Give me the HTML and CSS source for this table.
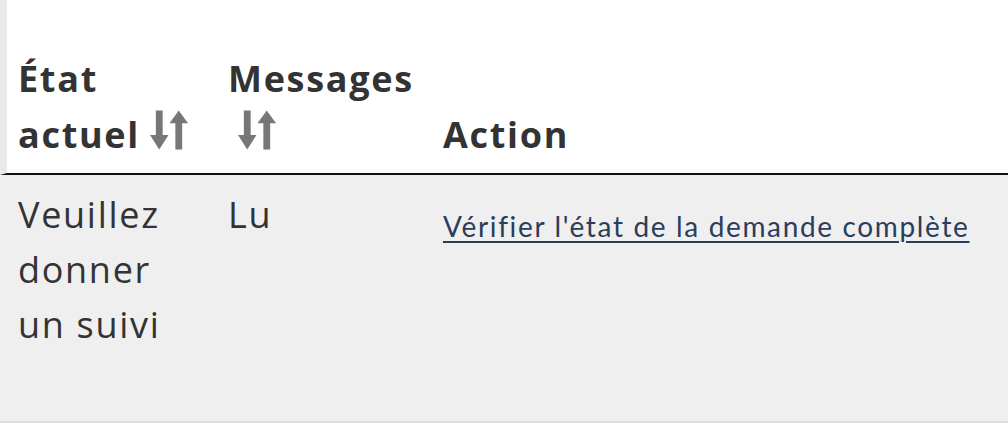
FILE: index.html
```html
<!DOCTYPE html>
<html lang="fr">
<head>
<meta charset="utf-8">
<title>Demandes</title>
<link rel="stylesheet" href="styles.css">
</head>
<body>
<table class="requests">
  <colgroup>
    <col class="col-state">
    <col class="col-messages">
    <col class="col-action">
  </colgroup>
  <thead>
    <tr>
      <th class="first">État actuel<wbr><svg class="sort" viewBox="0 0 40 40" width="39" height="40" aria-hidden="true"><rect x="6" y="0" width="7" height="27" /><polygon points="0,25 19,25 9.5,40" /><polygon points="20,13 39,13 29.5,0" /><rect x="26" y="11" width="7" height="29" /></svg></th>
      <th>Messages<wbr><svg class="sort" viewBox="0 0 40 40" width="39" height="40" aria-hidden="true"><rect x="6" y="0" width="7" height="27" /><polygon points="0,25 19,25 9.5,40" /><polygon points="20,13 39,13 29.5,0" /><rect x="26" y="11" width="7" height="29" /></svg></th>
      <th>Action</th>
    </tr>
  </thead>
  <tbody>
    <tr>
      <td class="first">Veuillez donner un suivi</td>
      <td>Lu</td>
      <td class="action"><a href="#">Vérifier l'état de la demande complète</a></td>
    </tr>
  </tbody>
</table>
</body>
</html>
```

FILE: styles.css
```css
html, body {
  margin: 0;
  padding: 0;
  background: #ffffff;
}

body {
  font-family: "Open Sans", "Noto Sans", sans-serif;
  color: #333333;
}

.requests {
  width: 1008px;
  border-collapse: separate;
  border-spacing: 0;
  table-layout: fixed;
}

.col-state { width: 228px; }
.col-messages { width: 215px; }

.requests th {
  height: 175px;
  box-sizing: border-box;
  text-align: left;
  vertical-align: bottom;
  font-weight: 700;
  font-size: 36px;
  line-height: 56px;
  letter-spacing: 1.7px;
  padding: 0 15px 10px 0;
  border-bottom: 2px solid #111111;
}

.requests th.first {
  border-left: 7px solid #e9e9e9;
  padding-left: 11px;
  padding-right: 34px;
}

.sort {
  fill: #777777;
  vertical-align: -2px;
  margin-left: 10px;
}

.requests td {
  background: #efefef;
  vertical-align: top;
  font-size: 36px;
  line-height: 55px;
  letter-spacing: 1.7px;
  padding: 12px 15px 69px 0;
  border-bottom: 2px solid #dddddd;
}

.requests td.first {
  padding-left: 18px;
  padding-right: 34px;
}

.requests td.action {
  padding-top: 30px;
  font-family: "Lato", "Liberation Sans", sans-serif;
  font-size: 28px;
  line-height: 42px;
  letter-spacing: 1.65px;
}

.action a {
  color: #2b3d5c;
  text-decoration: underline;
  text-decoration-thickness: 2px;
  text-underline-offset: 4px;
}
```
